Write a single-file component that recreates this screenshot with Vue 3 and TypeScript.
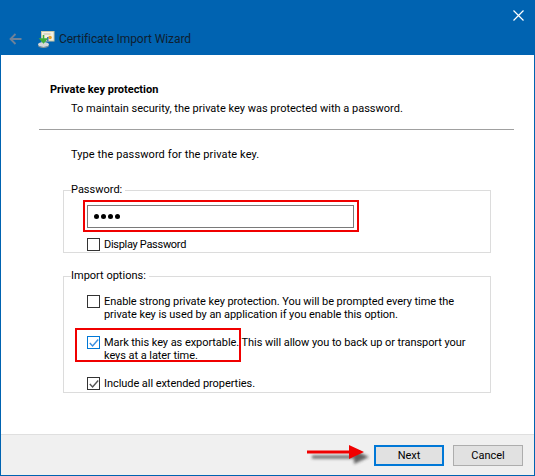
<script setup lang="ts">
import { ref } from 'vue'

const displayPassword = ref(false)
const strongProtection = ref(false)
const includeExtended = ref(true)
</script>

<template>
  <div class="wizard">
    <header class="titlebar">
      <div class="close-row">
        <svg class="close" width="11" height="11" viewBox="0 0 11 11">
          <path d="M0.5 0.5 L10.5 10.5 M10.5 0.5 L0.5 10.5" stroke="#fff" stroke-width="1.2" fill="none" />
        </svg>
      </div>
      <div class="nav-row">
        <svg class="back" width="13" height="12" viewBox="0 0 13 12">
          <path d="M12.5 6 H1.5 M6.5 1 L1.5 6 L6.5 11" stroke="#6f8299" stroke-width="1.8" fill="none" />
        </svg>
        <svg class="cert" width="18" height="18" viewBox="0 0 18 18">
          <rect x="4.5" y="1.5" width="12.5" height="9.5" fill="#f4f1e2" stroke="#c9c7a6" />
          <rect x="6.5" y="3.5" width="7" height="1" fill="#bdbcae" />
          <circle cx="13" cy="7.5" r="1.8" fill="#e8a126" />
          <rect x="10" y="7" width="1.5" height="4" fill="#3e6fc0" />
          <ellipse cx="6.5" cy="14.5" rx="5.5" ry="2.5" fill="#d5d8d8" />
          <path d="M1 14.5 a5.5 2.5 0 0 0 11 0 v1 a5.5 2.5 0 0 1 -11 0 z" fill="#8d9696" />
          <path d="M6.5 5 V9 M3.5 9 H9.5 L6.5 12.5 Z" stroke="#3fae3a" stroke-width="1.6" fill="#3fae3a" />
        </svg>
        <span class="wizard-title">Certificate Import Wizard</span>
      </div>
    </header>

    <main class="content">
      <h1 class="heading">Private key protection</h1>
      <p class="subheading">To maintain security, the private key was protected with a password.</p>
      <hr class="divider" />
      <p class="prompt">Type the password for the private key.</p>

      <fieldset class="group group-password">
        <legend>Password:</legend>
        <div class="highlight-input">
          <div class="input">
            <span v-for="n in 4" :key="n" class="dot"></span>
          </div>
        </div>
        <label class="check single">
          <span class="box" :class="{ on: displayPassword }"></span>
          <span>Display Password</span>
        </label>
      </fieldset>

      <fieldset class="group group-options">
        <legend>Import options:</legend>
        <label class="check">
          <span class="box" :class="{ on: strongProtection }"></span>
          <span>Enable strong private key protection. You will be prompted every time the<br />private key is used by an application if you enable this option.</span>
        </label>
        <label class="check exportable">
          <span class="box focus">
            <svg width="10" height="10" viewBox="0 0 10 10">
              <path d="M0.8 5 L3.6 8 L9.2 1.5" stroke="#3a8ee0" stroke-width="1.4" fill="none" />
            </svg>
          </span>
          <span>Mark this key as exportable. This will allow you to back up or transport your<br />keys at a later time.</span>
          <span class="highlight-mark"></span>
        </label>
        <label class="check">
          <span class="box">
            <svg v-if="includeExtended" width="10" height="10" viewBox="0 0 10 10">
              <path d="M0.8 5 L3.6 8 L9.2 1.5" stroke="#555" stroke-width="1.4" fill="none" />
            </svg>
          </span>
          <span>Include all extended properties.</span>
        </label>
      </fieldset>
    </main>

    <footer class="footer">
      <svg class="arrow" width="66" height="26" viewBox="0 0 66 26">
        <defs>
          <filter id="arrow-blur" x="-20%" y="-80%" width="140%" height="260%">
            <feGaussianBlur stdDeviation="1.4" />
          </filter>
        </defs>
        <path d="M0 5.5 H42 V0 L57 7 L42 14 V8.5 H0 Z" fill="#333" opacity="0.75" filter="url(#arrow-blur)" transform="translate(5 5)" />
        <path d="M0 5.5 H42 V0 L57 7 L42 14 V8.5 H0 Z" fill="#f00000" />
      </svg>
      <button class="btn primary">Next</button>
      <button class="btn">Cancel</button>
    </footer>
  </div>
</template>

<style>
html,
body {
  margin: 0;
  background: #fff;
}
</style>

<style scoped>
.wizard {
  position: relative;
  width: 535px;
  height: 476px;
  box-sizing: border-box;
  display: flex;
  flex-direction: column;
  border: 1px solid #0063b1;
  border-top: 0;
  font-family: Roboto, Lato, sans-serif;
  font-size: 11px;
  color: #000;
  background: #fff;
}

.titlebar {
  height: 55px;
  margin: 0 -1px;
  background: #0063b1;
  display: flex;
  flex-direction: column;
}

.close-row {
  display: flex;
  justify-content: flex-end;
  padding: 10px 11px 0 0;
  height: 13px;
}

.nav-row {
  display: flex;
  align-items: center;
  margin-top: 7px;
  padding-left: 9px;
}

.cert {
  margin-left: 15px;
}

.wizard-title {
  margin-left: 4px;
  font-size: 12px;
  letter-spacing: -0.08px;
  color: #0f1e30;
}

.content {
  flex: 1;
  padding: 0 20px 0 38px;
  display: flex;
  flex-direction: column;
}

.heading {
  margin: 27px 0 0 11px;
  font-size: 11px;
  font-weight: 700;
  line-height: 16px;
}

.subheading {
  margin: 3px 0 0 32px;
  line-height: 16px;
}

.divider {
  margin: 12px 0 0;
  border: 0;
  border-top: 1px solid #a0a0a0;
}

.prompt {
  margin: 17px 0 0 32px;
  line-height: 16px;
  letter-spacing: 0.1px;
}

.group {
  margin: 0 0 0 24px;
  padding: 0 0 0 23px;
  width: 428px;
  box-sizing: border-box;
  border: 1px solid #dcdcdc;
}

.group legend {
  margin-left: -16px;
  padding: 0 3px 0 0;
  line-height: 16px;
}

.group-password {
  height: 71px;
  margin-top: 19px;
}

.group-options {
  height: 125px;
  margin-top: 15px;
  padding-top: 11px;
}

.highlight-input {
  margin: 2px 0 0 -4px;
  width: 276px;
  height: 32px;
  box-sizing: border-box;
  padding: 3px 3px 2px 2px;
  border: 2px solid #f00000;
}

.input {
  height: 23px;
  box-sizing: border-box;
  border: 1px solid #7a7a7a;
  padding-left: 6px;
  display: flex;
  align-items: center;
  gap: 2px;
}

.dot {
  width: 5px;
  height: 5px;
  border-radius: 50%;
  background: #000;
}

.check {
  position: relative;
  display: flex;
  gap: 4px;
  line-height: 13px;
  white-space: nowrap;
  letter-spacing: -0.06px;
}

.check.single {
  margin-top: 6px;
  letter-spacing: -0.3px;
}

.box {
  flex: none;
  border: 1px solid #333;
  display: flex;
  align-items: center;
  justify-content: center;
  box-sizing: content-box;
  width: 11px;
  height: 11px;
}

.box.focus {
  border-color: #0078d7;
}

.exportable {
  margin: 15px 0;
}

.highlight-mark {
  position: absolute;
  left: -12px;
  top: -8px;
  width: 166px;
  height: 34px;
  box-sizing: border-box;
  border: 2px solid #f00000;
}

.footer {
  height: 41px;
  box-sizing: border-box;
  border-top: 1px solid #dfdfdf;
  background: #f0f0f0;
  display: flex;
  align-items: center;
  justify-content: flex-end;
  gap: 9px;
  padding: 0 11px 0 0;
  position: relative;
}

.arrow {
  position: absolute;
  left: 306px;
  top: 10px;
}

.btn {
  width: 70px;
  height: 21px;
  padding: 0;
  box-sizing: border-box;
  border: 1px solid #adadad;
  background: #e1e1e1;
  font: inherit;
  color: #000;
}

.btn.primary {
  border: 2px solid #0078d7;
}
</style>
